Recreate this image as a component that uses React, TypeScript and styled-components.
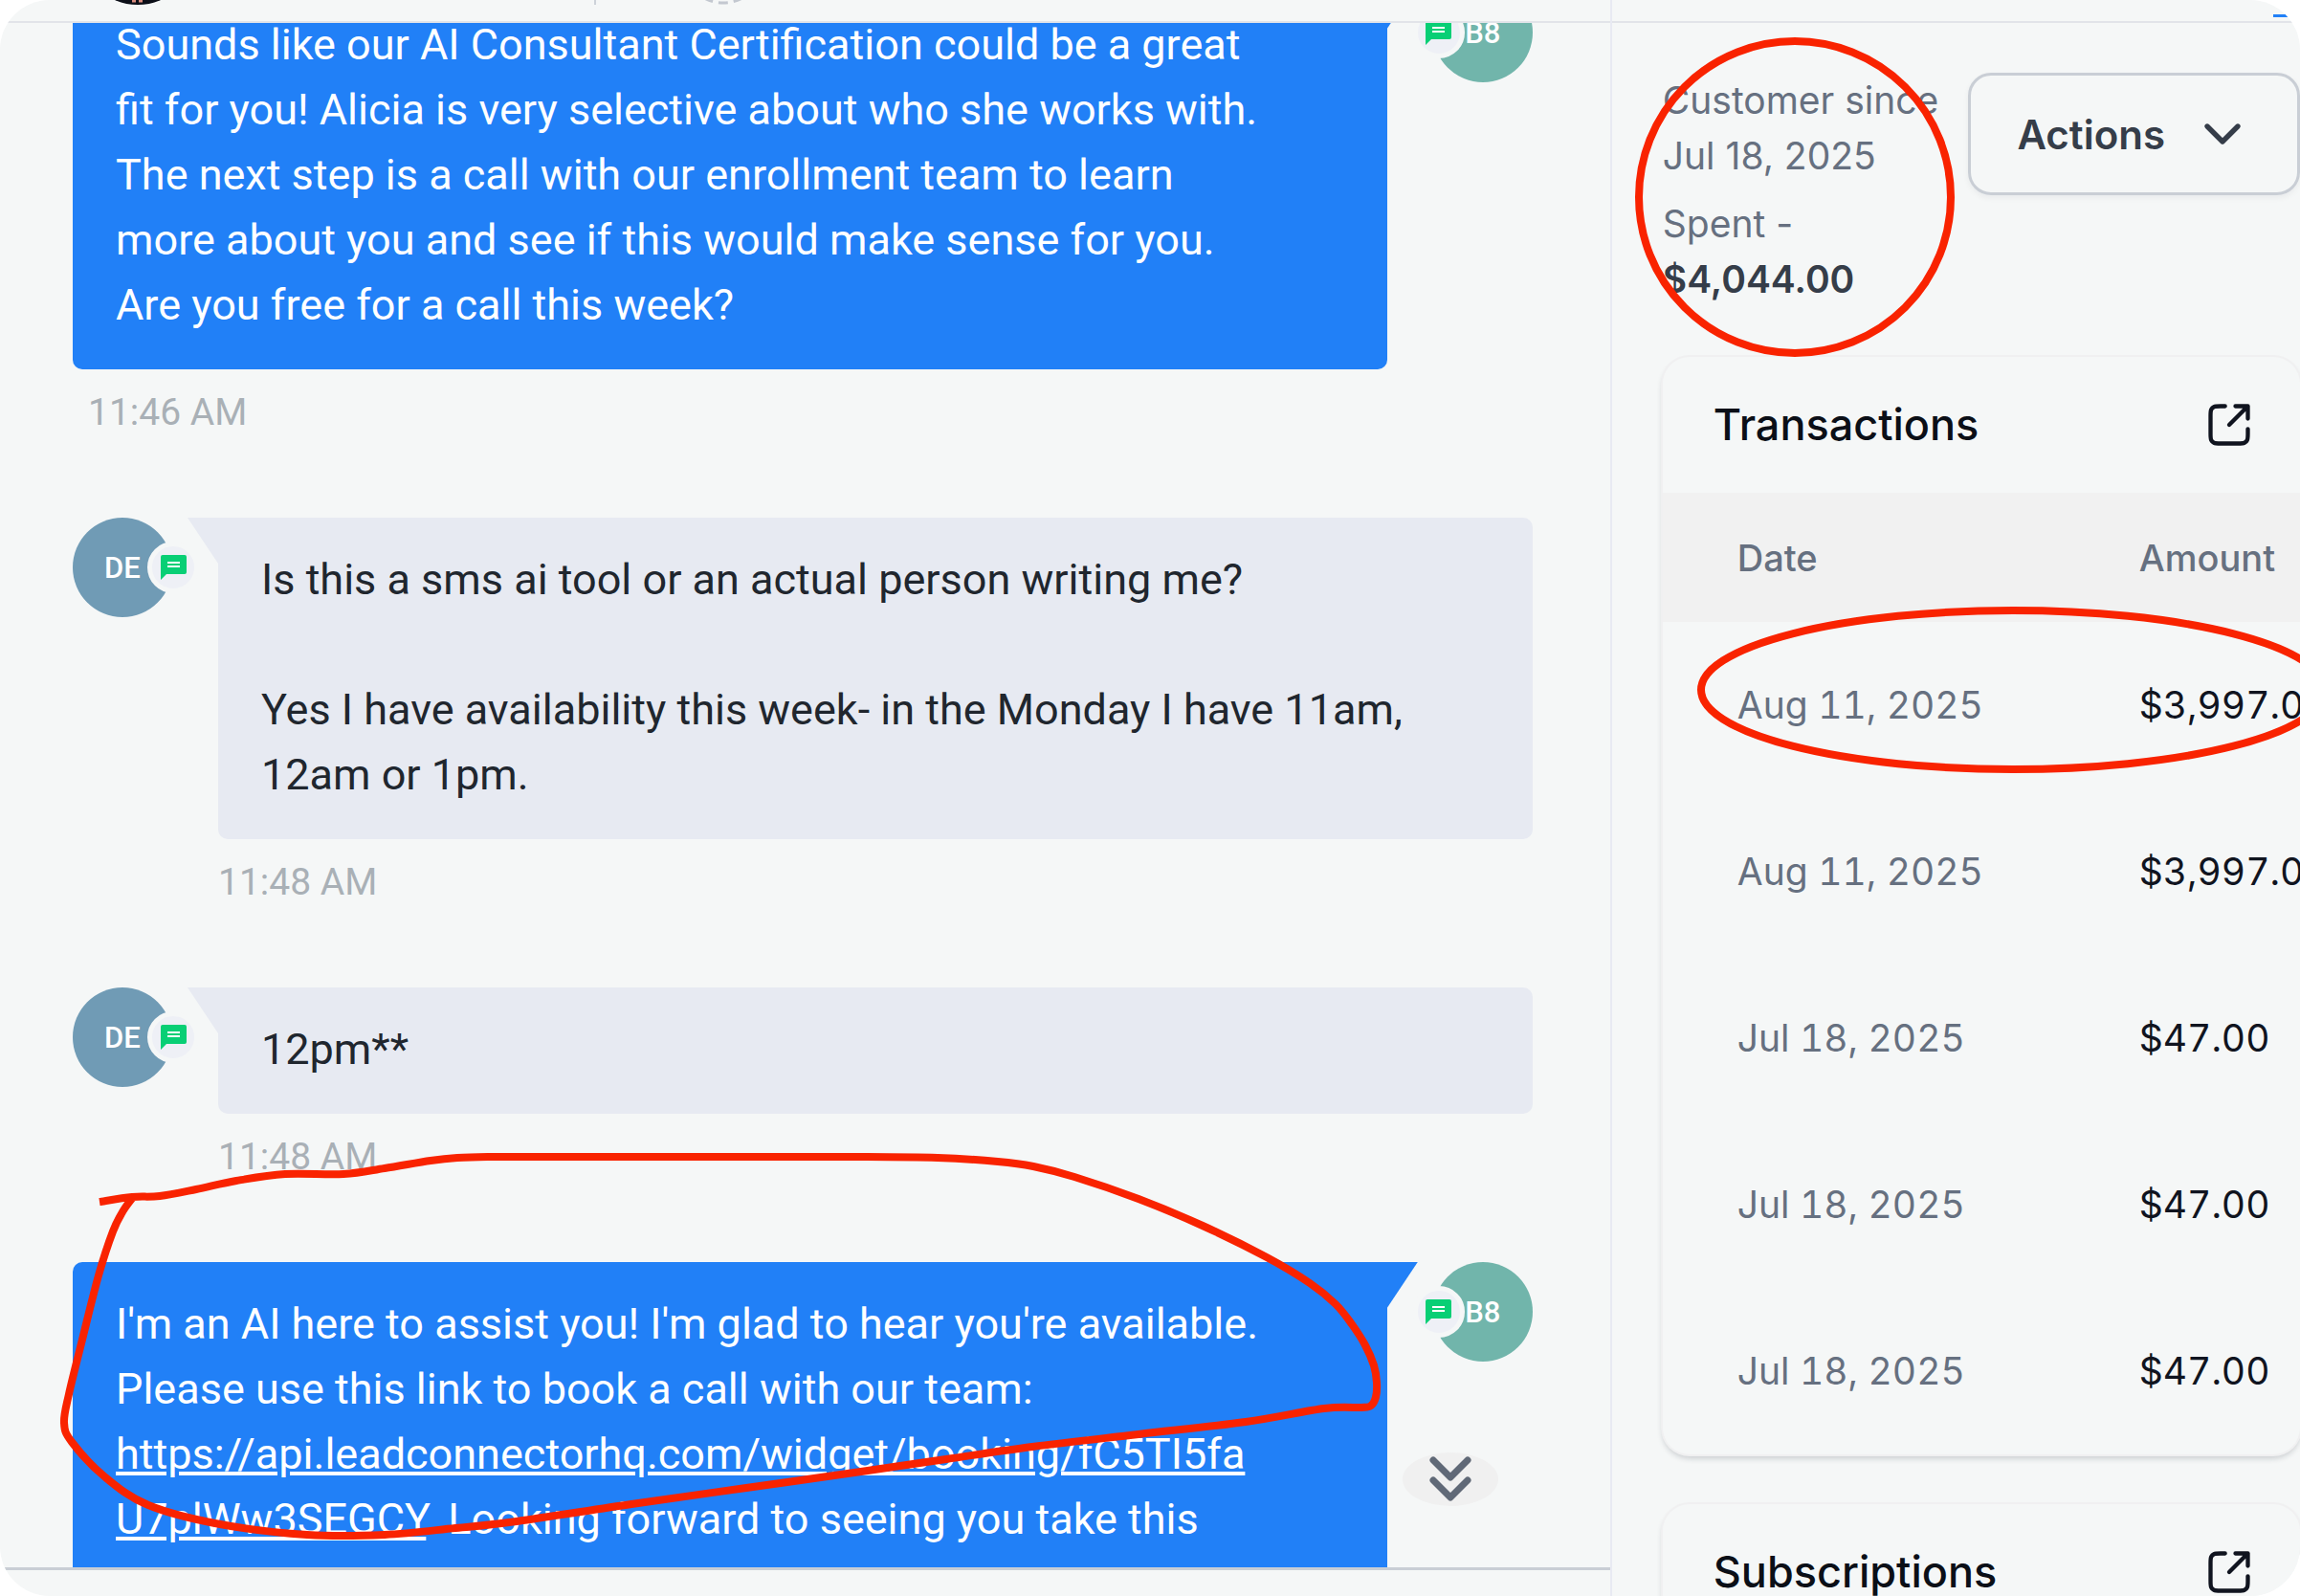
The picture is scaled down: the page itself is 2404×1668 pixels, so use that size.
import React, { useLayoutEffect, useRef } from 'react';
import styled, { createGlobalStyle, css } from 'styled-components';

const color = {
  page: '#f5f7f7',
  blue: '#2180f7',
  incoming: '#e7eaf2',
  ink: '#20262e',
  muted: '#a9b0b6',
  slate: '#667080',
  line: '#e2e4e9',
  marker: '#f92300',
};

const roboto = `Roboto, "Liberation Sans", sans-serif`;
const inter = `Inter, "Liberation Sans", sans-serif`;

const GlobalStyle = createGlobalStyle`
  *, *::before, *::after { box-sizing: border-box; }
  body { margin: 0; background: #ffffff; }
`;

const Page = styled.div`
  position: relative;
  display: grid;
  grid-template-columns: minmax(0, 7fr) minmax(0, 3fr);
  height: 100vh;
  overflow: hidden;
  border-radius: 52px;
  background: ${color.page};
`;

/* ---------- conversation ---------- */

const Conversation = styled.main`
  display: flex;
  flex-direction: column;
  min-height: 0;
  font-family: ${roboto};
`;

const TopBar = styled.header`
  display: flex;
  align-items: flex-end;
  flex: none;
  height: 24px;
  overflow: hidden;
  border-bottom: 2px solid ${color.line};
`;

const ContactBar = styled(TopBar)`
  padding: 0 84px 17px;
`;

const ContactPhoto = styled.svg`
  flex: none;
  width: 120px;
  height: 120px;
`;

const Separator = styled.span`
  flex: none;
  width: 2px;
  height: 64px;
  margin: 0 89px 0 417px;
  background: #cdd2d9;
`;

const StatusRing = styled.svg`
  flex: none;
  width: 88px;
  height: 88px;
`;

const Viewport = styled.div`
  position: relative;
  flex: 1;
  min-height: 0;
`;

const Scroller = styled.div`
  height: 100%;
  overflow-y: auto;
  scrollbar-width: none;
  padding: 0 81px 0 76px;
`;

const MessageRow = styled.article<{ $outgoing?: boolean }>`
  display: flex;
  flex-direction: ${p => (p.$outgoing ? 'row-reverse' : 'row')};
  gap: 48px;
  padding-bottom: 88px;
`;

const MessageBody = styled.div`
  flex: 1;
  min-width: 0;
`;

const Bubble = styled.div<{ $outgoing?: boolean }>`
  position: relative;
  padding: 31px 124px 33px 45px;
  border-radius: 10px;
  font-size: 45px;
  line-height: 68px;
  white-space: pre-wrap;
  overflow-wrap: anywhere;

  &::after {
    content: '';
    position: absolute;
    top: 0;
    width: 32px;
    height: 48px;
    background: inherit;
  }

  ${p =>
    p.$outgoing
      ? css`
          background: ${color.blue};
          color: #ffffff;
          border-top-right-radius: 0;
          &::after {
            left: 100%;
            clip-path: polygon(0 0, 100% 0, 0 100%);
          }
        `
      : css`
          background: ${color.incoming};
          color: ${color.ink};
          border-top-left-radius: 0;
          &::after {
            right: 100%;
            clip-path: polygon(0 0, 100% 0, 100% 100%);
          }
        `}
`;

const BubbleLink = styled.a`
  color: inherit;
  text-decoration: underline;
`;

const Time = styled.time<{ $outgoing?: boolean }>`
  display: block;
  margin-top: 23px;
  padding-left: ${p => (p.$outgoing ? 16 : 0)}px;
  color: ${color.muted};
  font-size: 39px;
  line-height: 44px;
`;

const Avatar = styled.div<{ $outgoing?: boolean }>`
  position: relative;
  flex: none;
  display: flex;
  align-items: center;
  justify-content: center;
  width: 104px;
  height: 104px;
  border-radius: 50%;
  background: ${p => (p.$outgoing ? '#71b5ab' : '#709bb5')};
  color: #ffffff;
  font-size: 31px;
  font-weight: 500;
`;

const ChannelBadge = styled.span<{ $outgoing?: boolean }>`
  position: absolute;
  top: 25px;
  ${p => (p.$outgoing ? 'left: -21px;' : 'right: -28px;')}
  display: flex;
  align-items: center;
  justify-content: center;
  width: 54px;
  height: 54px;
  border: 5px solid ${color.page};
  border-radius: 50%;
  background: #eef0f6;
`;

const JumpButton = styled.button`
  position: absolute;
  right: 117px;
  bottom: 64px;
  display: flex;
  align-items: center;
  justify-content: center;
  width: 100px;
  height: 56px;
  padding: 0;
  border: 0;
  border-radius: 50%;
  background: #f0f0f0;
  color: #606977;
`;

const Composer = styled.footer`
  flex: none;
  height: 30px;
  border-top: 3px solid #c9ced5;
`;

/* ---------- customer panel ---------- */

const Panel = styled.aside`
  display: flex;
  flex-direction: column;
  min-height: 0;
  overflow: hidden;
  border-left: 2px solid #e8eaf2;
  font-family: ${inter};
`;

const TabBar = styled(TopBar)`
  justify-content: flex-end;
  padding-bottom: 4px;
`;

const ActiveTab = styled.span`
  width: 28px;
  height: 3px;
  background: ${color.blue};
`;

const PanelContent = styled.div`
  display: flex;
  flex-direction: column;
  gap: 52px;
  padding: 52px 0 0 53px;
`;

const Summary = styled.section`
  display: flex;
  align-items: flex-start;
  justify-content: space-between;
  gap: 24px;
`;

const Facts = styled.div`
  display: flex;
  flex: 1;
  flex-direction: column;
  gap: 13px;
  min-width: 0;
`;

const Fact = styled.p`
  margin: 0;
  color: ${color.slate};
  font-size: 39px;
  line-height: 58px;

  strong {
    color: #353d49;
    font-weight: 600;
  }
`;

const ActionsButton = styled.button`
  display: flex;
  flex: none;
  align-items: center;
  gap: 28px;
  height: 128px;
  padding: 0 46px 0 48px;
  border: 3px solid #c9ced5;
  border-radius: 24px;
  background: transparent;
  box-shadow: 0 3px 6px rgba(16, 24, 40, 0.05);
  color: #353d49;
  font-family: inherit;
  font-size: 42px;
  font-weight: 600;
`;

const Card = styled.section`
  overflow: hidden;
  border-radius: 28px;
  background: ${color.page};
  box-shadow: 0 0 0 2px #f0f0f1, 0 4px 6px rgba(16, 24, 40, 0.2);
`;

const CardHead = styled.div`
  display: flex;
  align-items: center;
  justify-content: space-between;
  padding: 44px 48px 44px 53px;
`;

const CardTitle = styled.h2`
  margin: 0;
  color: #0b0f17;
  font-size: 45px;
  font-weight: 500;
  line-height: 54px;
`;

const IconButton = styled.button`
  display: flex;
  width: 52px;
  height: 52px;
  padding: 0;
  border: 0;
  background: transparent;
  color: #10141f;
`;

const Table = styled.table`
  width: 100%;
  table-layout: fixed;
  border-collapse: collapse;
  font-size: 39px;
  line-height: 58px;
  white-space: nowrap;
`;

const DateColumn = styled.col`
  width: 498px;
`;

const HeadCell = styled.th`
  height: 135px;
  padding: 0;
  background: #f1f1f1;
  color: ${color.slate};
  font-size: 38px;
  font-weight: 500;
  text-align: left;

  &:first-child {
    padding-left: 78px;
  }
`;

const Cell = styled.td`
  height: 174px;
  padding: 0;
  color: #10141f;
  font-variant-numeric: tabular-nums;

  &:first-child {
    padding-left: 78px;
    color: ${color.slate};
  }
`;

const Markup = styled.svg`
  position: absolute;
  top: 0;
  left: 0;
  width: 2404px;
  height: 1668px;
  pointer-events: none;
`;

/* ---------- icons ---------- */

const MessageIcon = () => (
  <svg width="27" height="26" viewBox="0 0 27 26" aria-hidden="true">
    <path d="M2 0h23a2 2 0 0 1 2 2v16a2 2 0 0 1-2 2H6l-6 6V2a2 2 0 0 1 2-2z" fill="#08cf75" />
    <path d="M7 8h13M7 12h13" stroke="#ffffff" strokeWidth="2" />
  </svg>
);

const ExternalIcon = () => (
  <svg width="52" height="52" viewBox="0 0 24 24" fill="none" stroke="currentColor" strokeWidth="2" strokeLinecap="round" strokeLinejoin="round" aria-hidden="true">
    <path d="M21 9V3M21 3H15M21 3L12 12M10 3H7.8C6.12 3 5.28 3 4.64 3.33C4.07 3.61 3.61 4.07 3.33 4.64C3 5.28 3 6.12 3 7.8V16.2C3 17.88 3 18.72 3.33 19.36C3.61 19.93 4.07 20.39 4.64 20.67C5.28 21 6.12 21 7.8 21H16.2C17.88 21 18.72 21 19.36 20.67C19.93 20.39 20.39 19.93 20.67 19.36C21 18.72 21 17.88 21 16.2V14" />
  </svg>
);

const ChevronIcon = () => (
  <svg width="64" height="64" viewBox="0 0 24 24" fill="none" stroke="currentColor" strokeWidth="2" strokeLinecap="round" strokeLinejoin="round" aria-hidden="true">
    <path d="M6 9l6 6 6-6" />
  </svg>
);

const DoubleChevronIcon = () => (
  <svg width="48" height="48" viewBox="0 0 48 48" fill="none" stroke="currentColor" strokeWidth="7" strokeLinecap="round" strokeLinejoin="round" aria-hidden="true">
    <path d="M6 4l18 18L42 4M6 25l18 18 18-18" />
  </svg>
);

/* ---------- data ---------- */

type Message = { outgoing?: boolean; time: string; text: React.ReactNode };

const messages: Message[] = [
  {
    outgoing: true,
    time: '11:46 AM',
    text: 'Sounds like our AI Consultant Certification could be a great fit for you! Alicia is very selective about who she works with. The next step is a call with our enrollment team to learn more about you and see if this would make sense for you. Are you free for a call this week?',
  },
  {
    time: '11:48 AM',
    text: 'Is this a sms ai tool or an actual person writing me?\n\nYes I have availability this week- in the Monday I have 11am, 12am or 1pm.',
  },
  { time: '11:48 AM', text: '12pm**' },
  {
    outgoing: true,
    time: '11:48 AM',
    text: (
      <>
        I'm an AI here to assist you! I'm glad to hear you're available. Please use this link to book a call with our team:{' '}
        <BubbleLink href="https://api.leadconnectorhq.com/widget/booking/fC5TI5faU7plWw3SEGCY">
          https://api.leadconnectorhq.com/widget/booking/fC5TI5faU7plWw3SEGCY
        </BubbleLink>
        . Looking forward to seeing you take this
      </>
    ),
  },
];

const transactions = [
  ['Aug 11, 2025', '$3,997.00'],
  ['Aug 11, 2025', '$3,997.00'],
  ['Jul 18, 2025', '$47.00'],
  ['Jul 18, 2025', '$47.00'],
  ['Jul 18, 2025', '$47.00'],
];

type Point = [number, number];

const loop: Point[] = [
  [104, 1256], [138, 1251], [167, 1250], [205, 1243], [247, 1234], [298, 1227], [359, 1227],
  [402, 1221], [450, 1213], [478, 1210], [510, 1209], [560, 1209], [700, 1209], [900, 1209],
  [980, 1210], [1043, 1214], [1080, 1219], [1123, 1230], [1190, 1253], [1257, 1281], [1324, 1314],
  [1369, 1341], [1396, 1363], [1413, 1384], [1427, 1406], [1436, 1427], [1439, 1445], [1438, 1460],
  [1433, 1469], [1423, 1471], [1384, 1472], [1302, 1486], [1190, 1499], [1079, 1512],
  [989, 1525], [900, 1538], [780, 1555], [660, 1572], [540, 1590], [476, 1597], [402, 1604], [321, 1604],
  [230, 1593], [155, 1573], [109, 1543], [75, 1507], [67, 1487], [72, 1457], [86, 1400],
  [103, 1333], [118, 1287], [129, 1265], [140, 1250],
];

/* Catmull-Rom spline through the points, written as cubic segments */
const smooth = (pts: Point[]) =>
  pts.slice(1).reduce((d, p, i) => {
    const a = pts[Math.max(i - 1, 0)];
    const b = pts[i];
    const c = pts[Math.min(i + 2, pts.length - 1)];
    const x1 = b[0] + (p[0] - a[0]) / 6;
    const y1 = b[1] + (p[1] - a[1]) / 6;
    const x2 = p[0] - (c[0] - b[0]) / 6;
    const y2 = p[1] - (c[1] - b[1]) / 6;
    return `${d}C${x1} ${y1} ${x2} ${y2} ${p[0]} ${p[1]}`;
  }, `M${pts[0][0]} ${pts[0][1]}`);

export default function App() {
  const scroller = useRef<HTMLDivElement>(null);

  useLayoutEffect(() => {
    if (scroller.current) scroller.current.scrollTop = 42;
  }, []);

  return (
    <>
      <GlobalStyle />
      <Page>
        <Conversation>
          <ContactBar>
            <ContactPhoto viewBox="0 0 120 120" aria-hidden="true">
              <circle cx="60" cy="60" r="60" fill="#0c0f18" />
              <path d="M54 116h12" stroke="#d98b7d" strokeWidth="3" strokeDasharray="4 3" />
            </ContactPhoto>
            <Separator />
            <StatusRing viewBox="0 0 88 88" aria-hidden="true">
              <circle cx="44" cy="44" r="42" fill="none" stroke="#c3c8d0" strokeWidth="3" strokeDasharray="10 6" strokeDashoffset="-13" />
            </StatusRing>
          </ContactBar>
          <Viewport>
            <Scroller ref={scroller}>
              {messages.map((m, i) => (
                <MessageRow key={i} $outgoing={m.outgoing}>
                  <Avatar $outgoing={m.outgoing}>
                    {m.outgoing ? 'B8' : 'DE'}
                    <ChannelBadge $outgoing={m.outgoing}>
                      <MessageIcon />
                    </ChannelBadge>
                  </Avatar>
                  <MessageBody>
                    <Bubble $outgoing={m.outgoing}>{m.text}</Bubble>
                    <Time $outgoing={m.outgoing}>{m.time}</Time>
                  </MessageBody>
                </MessageRow>
              ))}
            </Scroller>
            <JumpButton aria-label="Jump to latest message">
              <DoubleChevronIcon />
            </JumpButton>
          </Viewport>
          <Composer />
        </Conversation>

        <Panel>
          <TabBar>
            <ActiveTab />
          </TabBar>
          <PanelContent>
            <Summary>
              <Facts>
                <Fact>Customer since Jul 18, 2025</Fact>
                <Fact>
                  Spent - <strong>$4,044.00</strong>
                </Fact>
              </Facts>
              <ActionsButton>
                Actions
                <ChevronIcon />
              </ActionsButton>
            </Summary>

            <Card>
              <CardHead>
                <CardTitle>Transactions</CardTitle>
                <IconButton aria-label="Open transactions">
                  <ExternalIcon />
                </IconButton>
              </CardHead>
              <Table>
                <colgroup>
                  <DateColumn />
                  <col />
                </colgroup>
                <thead>
                  <tr>
                    <HeadCell scope="col">Date</HeadCell>
                    <HeadCell scope="col">Amount</HeadCell>
                  </tr>
                </thead>
                <tbody>
                  {transactions.map(([date, amount], i) => (
                    <tr key={i}>
                      <Cell>{date}</Cell>
                      <Cell>{amount}</Cell>
                    </tr>
                  ))}
                </tbody>
              </Table>
            </Card>

            <Card>
              <CardHead>
                <CardTitle>Subscriptions</CardTitle>
                <IconButton aria-label="Open subscriptions">
                  <ExternalIcon />
                </IconButton>
              </CardHead>
            </Card>
          </PanelContent>
        </Panel>

        <Markup viewBox="0 0 2404 1668" fill="none" stroke={color.marker} strokeWidth="8" aria-hidden="true">
          <circle cx="1876" cy="206" r="163" />
          <ellipse cx="2104" cy="721" rx="326" ry="83" />
          <path d={smooth(loop)} strokeLinejoin="round" />
        </Markup>
      </Page>
    </>
  );
}
